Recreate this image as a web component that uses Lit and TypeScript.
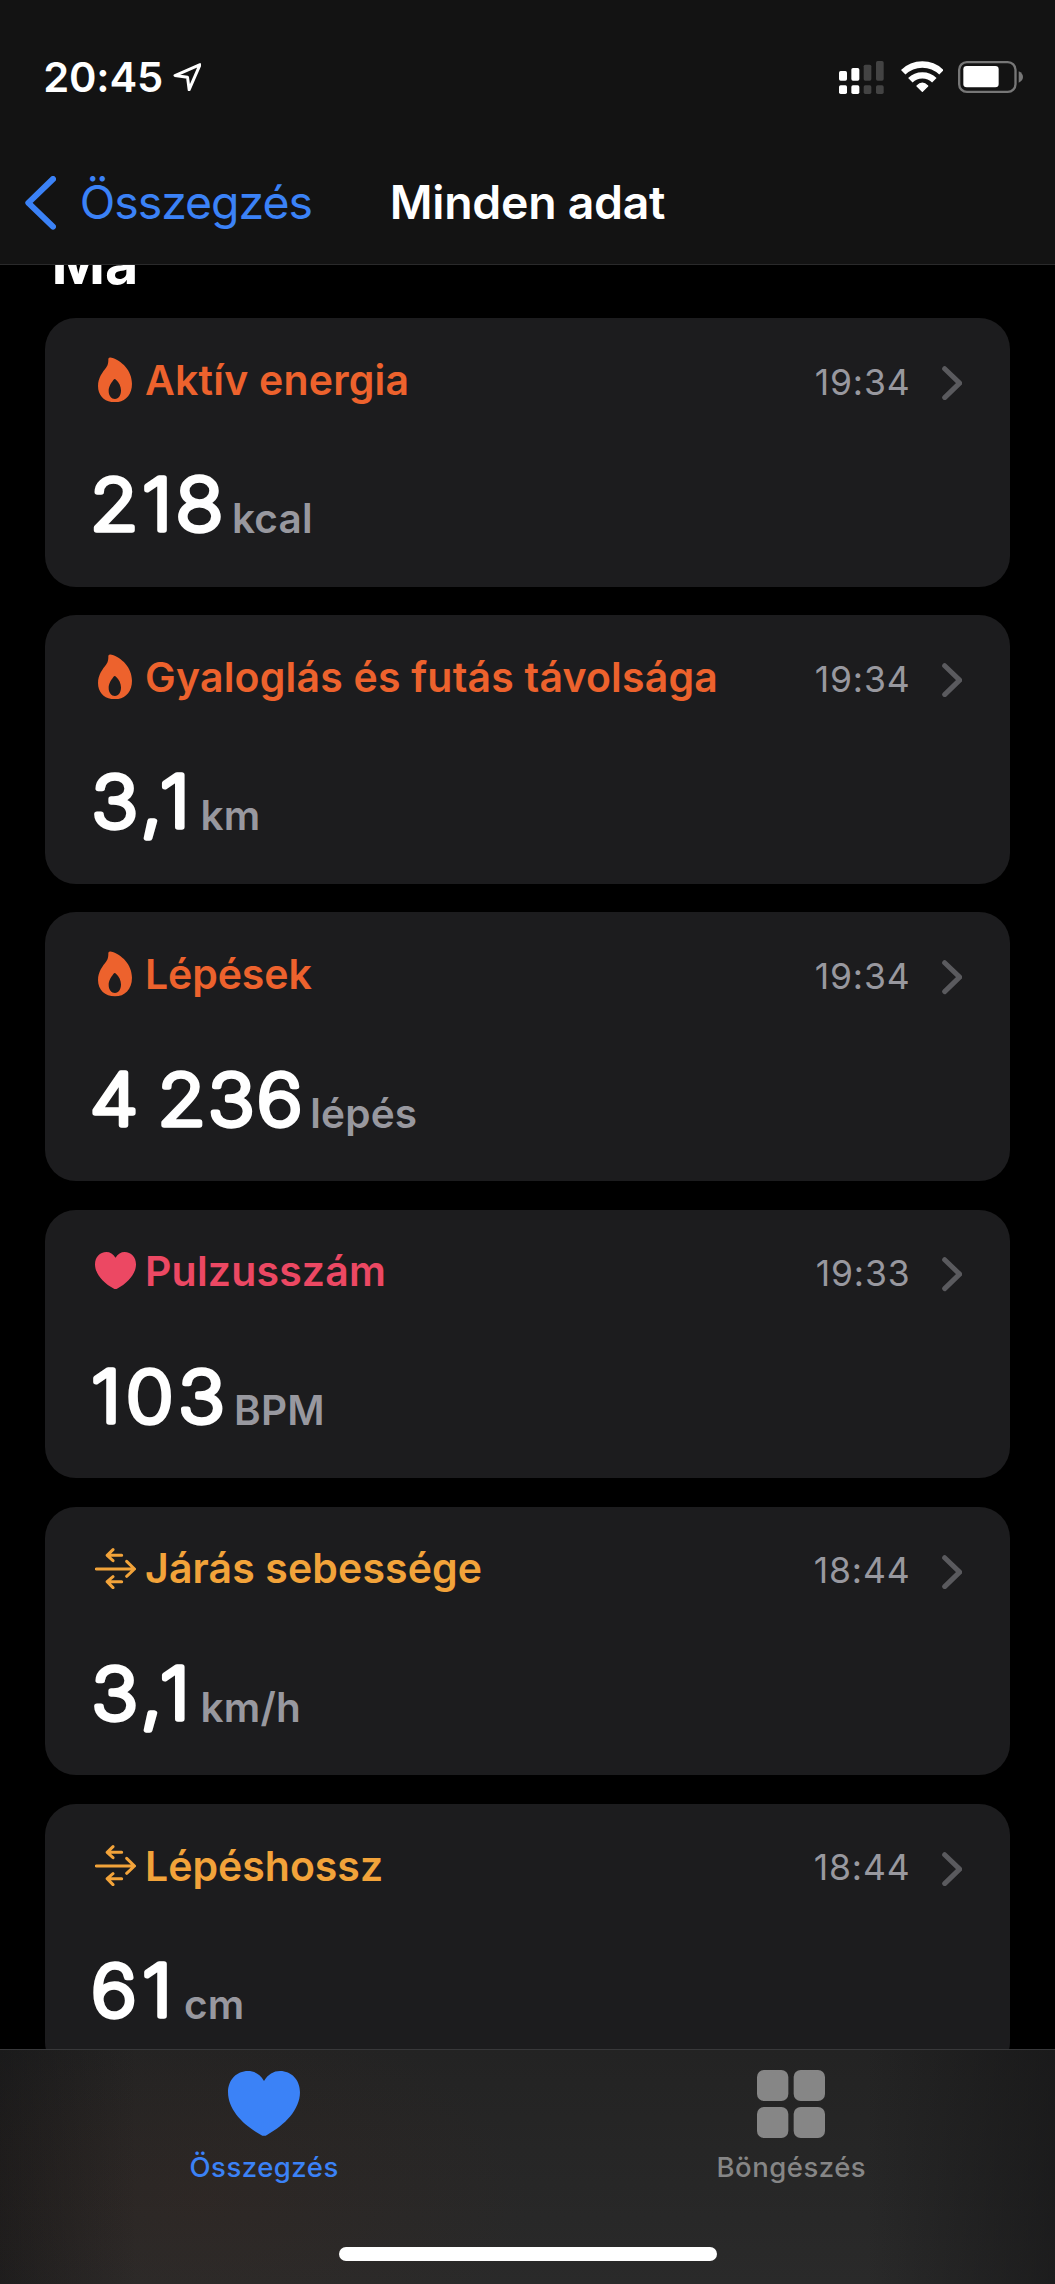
import { LitElement, html, svg, css } from "lit";
import { customElement, property } from "lit/decorators.js";

type Kind = "flame" | "heart" | "arrows";

interface Metric {
  kind: Kind;
  title: string;
  spacing: number;
  time: string;
  value: string;
  valueX: number;
  valueSpacing: number;
  valueBox: number;
  unit: string;
}

const METRICS: Metric[] = [
  { kind: "flame", title: "Aktív energia", spacing: 0.2, time: "19:34", value: "218", valueX: -0.9, valueSpacing: 3.4, valueBox: 141, unit: "kcal" },
  { kind: "flame", title: "Gyaloglás és futás távolsága", spacing: 0.2, time: "19:34", value: "3,1", valueX: 0.4, valueSpacing: 4.1, valueBox: 109.6, unit: "km" },
  { kind: "flame", title: "Lépések", spacing: -0.1, time: "19:34", value: "4 236", valueX: -0.9, valueSpacing: 2.1, valueBox: 219.3, unit: "lépés" },
  { kind: "heart", title: "Pulzusszám", spacing: 0.17, time: "19:33", value: "103", valueX: 0.3, valueSpacing: 4.5, valueBox: 143, unit: "BPM" },
  { kind: "arrows", title: "Járás sebessége", spacing: 0.12, time: "18:44", value: "3,1", valueX: 0.4, valueSpacing: 4.1, valueBox: 109.6, unit: "km/h" },
  { kind: "arrows", title: "Lépéshossz", spacing: 0, time: "18:44", value: "61", valueX: 0, valueSpacing: 5.2, valueBox: 93, unit: "cm" },
];

const HEART = "M108 30C120 10 137 0 156 0C190 0 216 26 216 64C216 116 170 163 118 191Q108 198 98 191C46 163 0 116 0 64C0 26 26 0 60 0C79 0 96 10 108 30Z";

const ICONS = {
  flame: svg`<svg width="34" height="45.3" viewBox="205 170 102 136"><path fill="currentColor" fill-rule="evenodd" d="M236 175Q238 170 246 172C275 180 307 210 307 250C307 285 285 306 256 306C226 306 205 287 205 257C205 232 219 216 230 201C236 192 236 184 236 175ZM251 239Q255 234 259 238C268 246 274 258 274 270C274 286 267 296 256 296C245 296 237 286 237 272C237 258 245 248 251 239Z"/></svg>`,
  heart: svg`<svg width="41" height="37.3" viewBox="0 0 216 195" preserveAspectRatio="none"><path fill="currentColor" d=${HEART}/></svg>`,
  arrows: svg`<svg width="41" height="41" viewBox="195 144 123 123"><g fill="none" stroke="currentColor" stroke-width="9" stroke-linecap="round" stroke-linejoin="round"><path d="M199 207H313M290 184L313.500 207L290 229"/><path d="M275 166H233M249 149L231.500 166L249 182"/><path d="M275 245H233M249 230L231.500 245L249 263"/></g></svg>`,
};

@customElement("metric-card")
export class MetricCard extends LitElement {
  @property({ attribute: false }) metric!: Metric;

  static styles = css`
    :host { display: block; flex: none; }
    .card {
      box-sizing: border-box; height: 268.7px; padding: 38px 47.7px 0 46px;
      border-radius: 31px; background: #1c1c1e; overflow: hidden;
    }
    .head { display: flex; align-items: center; height: 48px; padding-left: 4px; }
    .icon { display: flex; box-sizing: border-box; width: 41px; justify-content: center; }
    .icon svg { display: block; flex: none; }
    .flame .icon { padding: 0 1.6px 1px 0; }
    .heart .icon { padding-bottom: 2px; }
    .title { flex: 1; margin: -0.8px 0 0 9px; font-size: 41px; font-weight: 600; line-height: 48px; white-space: nowrap; }
    .flame { color: #ed622d; }
    .heart { color: #ec4863; }
    .arrows { color: #f2a33a; }
    .time { margin: 4px 31.5px 0 0; font-size: 35.5px; letter-spacing: 0.85px; color: #98989f; }
    .chevron { display: block; margin-top: 6px; }
    .reading { display: flex; align-items: baseline; margin-top: 71.3px; }
    .value { display: block; height: 58px; overflow: visible; }
    .digits {
      font-family: Inter, "Liberation Sans", sans-serif; font-size: 71.2px; font-weight: 200; word-spacing: -6.6px;
      fill: #fff; stroke: #fff; stroke-width: 5.4px; stroke-linejoin: round;
    }
    .unit { font-size: 40.5px; font-weight: 600; line-height: 40px; letter-spacing: 0.2px; color: #98989f; }
  `;

  render() {
    const m = this.metric;
    return html`
      <div class="card">
        <div class="head ${m.kind}">
          <span class="icon">${ICONS[m.kind]}</span>
          <span class="title" style="letter-spacing:${m.spacing}px">${m.title}</span>
          <span class="time">${m.time}</span>
          <svg class="chevron" width="20.3" height="34.3" viewBox="547 197 61 103"><path d="M555 205L600 248.500L555 292" fill="none" stroke="#5a5a5e" stroke-width="15" stroke-linecap="round" stroke-linejoin="round"/></svg>
        </div>
        <div class="reading">
          <svg class="value" width=${m.valueBox} height="58"><text class="digits" transform="translate(${m.valueX} 55.4) scale(1.1 1)" style="letter-spacing:${m.valueSpacing}px">${m.value}</text></svg>
          <span class="unit">${m.unit}</span>
        </div>
      </div>
    `;
  }
}

@customElement("app-root")
export class AppRoot extends LitElement {
  static styles = css`
    :host { display: block; font-family: Inter, "Liberation Sans", sans-serif; }
    .screen { display: flex; flex-direction: column; width: 1055px; height: 2284px; background: #000; color: #fff; overflow: hidden; }
    svg { display: block; flex: none; }

    .top { flex: none; height: 264px; border-bottom: 1.3px solid #2a2a2b; background: #131313; }
    .status { display: flex; align-items: center; box-sizing: border-box; height: 141px; padding: 13px 31.7px 0 43.3px; }
    .clock { font-size: 41.7px; font-weight: 600; line-height: 42px; letter-spacing: -0.2px; margin-right: 9.7px; }
    .signals { display: flex; align-items: center; margin-left: auto; }
    .cell { margin-right: 17px; }
    .wifi { margin-right: 15px; }

    .nav { display: grid; grid-template-columns: 1fr auto 1fr; align-items: center; height: 123px; }
    .back { display: flex; align-items: center; padding-left: 25px; color: #3b82f7; font-size: 46.4px; letter-spacing: -1px; }
    .back svg { margin-right: 23.7px; }
    .back span, .heading { padding-bottom: 2px; }
    .heading { font-size: 46.4px; font-weight: 600; letter-spacing: -0.27px; }

    .content { flex: 1; min-height: 0; overflow: hidden; padding: 0 45px; }
    .day { margin: -31px 0 26px 6.5px; font-size: 57.5px; line-height: 58px; font-weight: 700; }
    .cards { display: flex; flex-direction: column; gap: 28.5px; }

    .tabs {
      flex: none; box-sizing: border-box; height: 235px; border-top: 1.3px solid #38383a;
      background:
        radial-gradient(ellipse 330px 190px at 200px 150px, rgba(75, 40, 25, 0.17), rgba(75, 40, 25, 0)),
        linear-gradient(90deg, rgba(20, 20, 21, 0.6), rgba(20, 20, 21, 0) 13%, rgba(20, 20, 21, 0) 82%, rgba(20, 20, 21, 0.6)),
        linear-gradient(#232323, #2a2a2a);
    }
    .bar { display: grid; grid-template-columns: 1fr 1fr; padding: 20px 0 0 0.5px; }
    .tab { display: flex; flex-direction: column; align-items: center; gap: 14px; font-size: 27.5px; font-weight: 500; line-height: 28px; letter-spacing: 0.5px; color: #868686; }
    .tab.on { color: #3b82f7; }
    .glyph { display: flex; box-sizing: border-box; align-items: flex-start; height: 69px; }
    .on .glyph { padding-top: 0.7px; }
    .home { width: 377.4px; height: 14.7px; margin: 65.7px 0 0 339.4px; border-radius: 8px; background: #fff; }
  `;

  render() {
    return html`
      <div class="screen">
        <header class="top">
          <div class="status">
            <span class="clock">20:45</span>
            <svg width="28.7" height="28.7" viewBox="517 97 87 87"><path d="M599 102L523 135L561 140L566 178Z" fill="none" stroke="#fff" stroke-width="9" stroke-linejoin="round"/></svg>
            <div class="signals">
              <svg class="cell" width="44.7" height="33" viewBox="117 93 134 99">
                <g fill="#fff"><rect x="117" y="123" width="24" height="29" rx="5"/><rect x="154" y="114" width="24" height="38" rx="5"/><rect x="117" y="166" width="24" height="26" rx="5"/><rect x="154" y="166" width="24" height="26" rx="5"/></g>
                <g fill="#434343"><rect x="191" y="104" width="23" height="48" rx="5"/><rect x="228" y="93" width="23" height="59" rx="5"/><rect x="191" y="166" width="23" height="26" rx="5"/><rect x="228" y="166" width="23" height="26" rx="5"/></g>
              </svg>
              <svg class="wifi" width="42.7" height="31.3" viewBox="302 93 128 94">
                <g fill="none" stroke="#fff" stroke-width="19"><path d="M308.500 127A82 82 0 0 1 423.500 127"/><path d="M330 151A51 51 0 0 1 402 151"/></g>
                <path d="M366 184L350 168Q366 152 382 168Z" fill="#fff" stroke="#fff" stroke-width="4" stroke-linejoin="round"/>
              </svg>
              <svg width="65" height="32" viewBox="475 93 195 96">
                <rect x="478.500" y="96.500" width="169" height="89" rx="23" fill="none" stroke="#777" stroke-width="7"/>
                <rect x="491" y="108" width="106" height="64" rx="10" fill="#fff"/>
                <path d="M657 124Q670 130 670 141Q670 152 657 158Z" fill="#777"/>
              </svg>
            </div>
          </div>
          <nav class="nav">
            <div class="back">
              <svg width="31" height="54" viewBox="75 437 93 162"><path d="M159 446L85 517.500L159 589" fill="none" stroke="currentColor" stroke-width="18" stroke-linecap="round" stroke-linejoin="round"/></svg>
              <span>Összegzés</span>
            </div>
            <div class="heading">Minden adat</div>
          </nav>
        </header>
        <main class="content">
          <div class="day">Ma</div>
          <div class="cards">${METRICS.map((m) => html`<metric-card .metric=${m}></metric-card>`)}</div>
        </main>
        <footer class="tabs">
          <div class="bar">
            <div class="tab on">
              <span class="glyph"><svg width="72" height="65.3" viewBox="0 0 216 196"><path fill="currentColor" d=${HEART}/></svg></span>
              <span>Összegzés</span>
            </div>
            <div class="tab">
              <span class="glyph"><svg width="68" height="68" viewBox="0 0 204 204"><g fill="currentColor"><rect width="94" height="93" rx="21"/><rect x="110" width="94" height="93" rx="21"/><rect y="111" width="94" height="93" rx="21"/><rect x="110" y="111" width="94" height="93" rx="21"/></g></svg></span>
              <span>Böngészés</span>
            </div>
          </div>
          <div class="home"></div>
        </footer>
      </div>
    `;
  }
}
